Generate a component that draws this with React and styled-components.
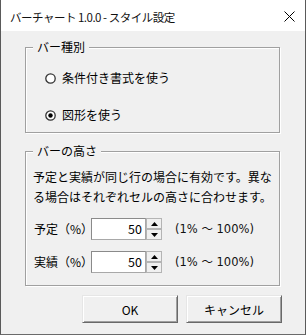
import React from 'react';
import styled, { createGlobalStyle } from 'styled-components';

const GlobalStyle = createGlobalStyle`
  html, body {
    margin: 0;
    padding: 0;
    background: #fff;
  }
  body {
    font-family: "Noto Sans CJK JP", "Noto Sans", sans-serif;
    font-size: 12px;
    color: #000;
  }
`;

const Window = styled.div`
  width: 306px;
  height: 335px;
  box-sizing: border-box;
  border-left: 1px solid #5a5a5a;
  border-right: 1px solid #5a5a5a;
  border-bottom: 1px solid #6a6a6a;
  background: #f0f0f0;
  display: flex;
  flex-direction: column;
`;

const TitleBar = styled.div`
  height: 31px;
  flex-shrink: 0;
  background: #fff;
  display: flex;
  align-items: center;
  justify-content: space-between;
  padding: 2px 10px 0 9px;
  box-sizing: border-box;
  line-height: 16px;
`;

const Title = styled.span`
  font-size: 11.5px;
  letter-spacing: -0.5px;
  color: #111;
`;

const Body = styled.div`
  flex: 1;
  display: flex;
  flex-direction: column;
  padding: 16px 25px 0 24px;
`;

const Frame = styled.div`
  position: relative;
  width: 255px;
  height: ${p => p.$h}px;
  margin-top: ${p => p.$top || 0}px;
  box-sizing: border-box;
  border: 1px solid #a0a0a0;
  box-shadow: inset 1px 1px 0 #fff, 1px 1px 0 #fff;
  padding: ${p => p.$pad};
`;

const Legend = styled.span`
  position: absolute;
  top: -9px;
  left: 7px;
  padding: 0 4px;
  background: #f0f0f0;
  line-height: 16px;
`;

const RadioList = styled.div`
  display: flex;
  flex-direction: column;
  gap: 17px;
`;

const RadioRow = styled.label`
  display: flex;
  align-items: center;
  gap: 6px;
  height: 20px;
  line-height: 20px;
`;

const Note = styled.p`
  margin: 0;
  line-height: 20px;
`;

const SpinRow = styled.div`
  display: flex;
  align-items: center;
  height: 22px;
  margin-top: 11px;
  padding-left: 1px;
`;

const FieldLabel = styled.span`
  width: 57px;
  line-height: 16px;
`;

const NumBox = styled.div`
  width: 55px;
  height: 22px;
  box-sizing: border-box;
  background: #fff;
  border: 1px solid #a8a8a8;
  border-top-color: #8a8a8a;
  border-left-color: #8a8a8a;
  text-align: right;
  padding-right: 3px;
  line-height: 20px;
  font-size: 12.5px;
`;

const Spinner = styled.div`
  width: 16px;
  height: 22px;
  display: flex;
  flex-direction: column;
`;

const SpinButton = styled.div`
  flex: 1;
  box-sizing: border-box;
  background: #f0f0f0;
  border: 1px solid;
  border-color: #fff #8a8a8a #8a8a8a #fff;
  display: flex;
  align-items: center;
  justify-content: center;
  outline: 1px solid #b4b4b4;
  outline-offset: -1px;
`;

const Range = styled.span`
  margin-left: 13px;
  line-height: 16px;
  font-family: "DejaVu Sans", "Noto Sans CJK JP", sans-serif;
  font-size: 11.5px;
  color: #111;
`;

const ButtonRow = styled.div`
  display: flex;
  justify-content: flex-end;
  gap: 8px;
  margin-top: 9px;
  margin-right: -2px;
`;

const Button = styled.button`
  width: 96px;
  height: 28px;
  box-sizing: border-box;
  font-family: inherit;
  font-size: 12px;
  color: #000;
  background: #f0f0f0;
  border: 1px solid;
  border-color: #e6e6e6 #696969 #696969 #e6e6e6;
  box-shadow: inset 1px 1px 0 #fff, inset -1px -1px 0 #a0a0a0;
  padding: 0;
`;

const CloseIcon = () => (
  <svg width="11" height="11" viewBox="0 0 11 11">
    <path d="M0.5 0.5 L10.5 10.5 M10.5 0.5 L0.5 10.5" stroke="#000" strokeWidth="1" fill="none" />
  </svg>
);

const RadioMark = ({ checked }) => (
  <svg width="11" height="11" viewBox="0 0 11 11">
    <circle cx="5.5" cy="5.5" r="4.7" fill="#fff" stroke="#333" strokeWidth="1.3" />
    {checked && <circle cx="5.5" cy="5.5" r="2.2" fill="#000" />}
  </svg>
);

const Arrow = ({ down }) => (
  <svg width="7" height="4" viewBox="0 0 7 4">
    <path d={down ? 'M0 0 L7 0 L3.5 4 Z' : 'M0 4 L7 4 L3.5 0 Z'} fill="#000" />
  </svg>
);

const SpinField = ({ label, value }) => (
  <SpinRow>
    <FieldLabel>{label}</FieldLabel>
    <NumBox>{value}</NumBox>
    <Spinner>
      <SpinButton><Arrow /></SpinButton>
      <SpinButton><Arrow down /></SpinButton>
    </Spinner>
    <Range>(1% ～ 100%)</Range>
  </SpinRow>
);

export default function App() {
  return (
    <>
      <GlobalStyle />
      <Window>
        <TitleBar>
          <Title>バーチャート 1.0.0 - スタイル設定</Title>
          <CloseIcon />
        </TitleBar>
        <Body>
          <Frame $h={86} $pad="20px 0 0 19px">
            <Legend>バー種別</Legend>
            <RadioList>
              <RadioRow><RadioMark />条件付き書式を使う</RadioRow>
              <RadioRow><RadioMark checked />図形を使う</RadioRow>
            </RadioList>
          </Frame>
          <Frame $h={135} $top={18} $pad="15px 4px 0 7px">
            <Legend>バーの高さ</Legend>
            <Note>予定と実績が同じ行の場合に有効です。異なる場合はそれぞれセルの高さに合わせます。</Note>
            <SpinField label="予定（%）" value="50" />
            <SpinField label="実績（%）" value="50" />
          </Frame>
          <ButtonRow>
            <Button>OK</Button>
            <Button>キャンセル</Button>
          </ButtonRow>
        </Body>
      </Window>
    </>
  );
}
